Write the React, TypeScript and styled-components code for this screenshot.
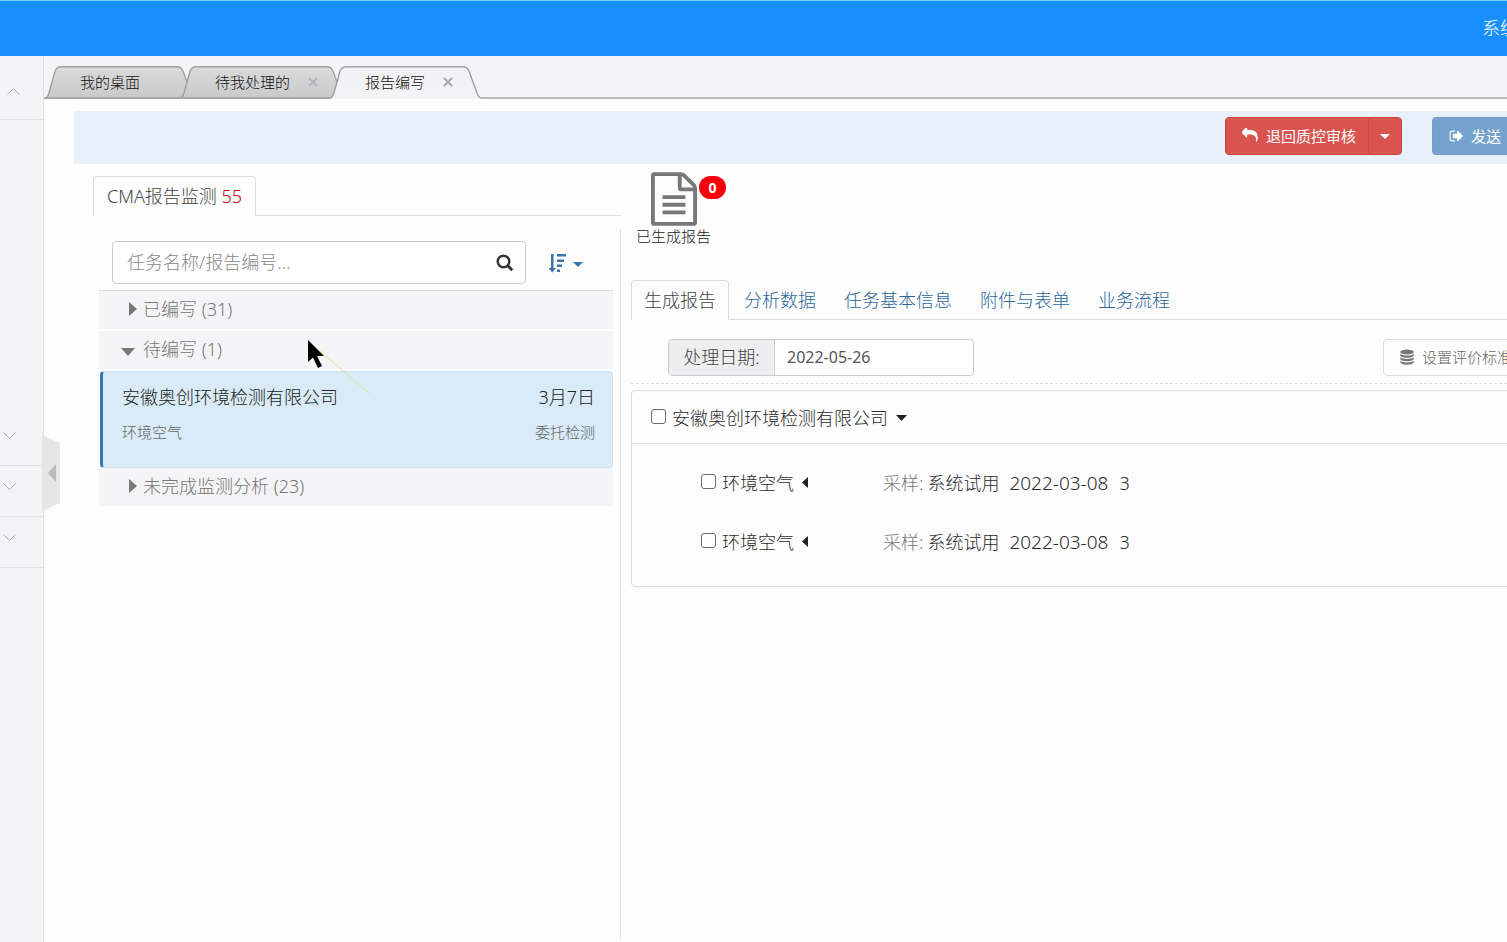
import React from 'react';
import styled, { createGlobalStyle } from 'styled-components';

const GlobalStyle = createGlobalStyle`
  * { box-sizing: border-box; }
  html, body, #root { height: 100%; }
  body {
    margin: 0;
    overflow: hidden;
    background: #fdfdfe;
    color: #2b2b2b;
    font-family: "Noto Sans", "Noto Sans CJK SC", sans-serif;
    font-size: 18px;
    font-weight: 300;
    line-height: 26px;
  }
  button, input { font: inherit; color: inherit; }
  button { background: none; border: 0; padding: 0; cursor: pointer; white-space: nowrap; }
  a { text-decoration: none; color: inherit; }
  svg { display: block; flex: none; }
`;

const Page = styled.div`
  display: flex;
  flex-direction: column;
  width: calc(100% + 60px);
  min-height: 100%;
`;

const Header = styled.header`
  display: flex;
  align-items: center;
  justify-content: flex-end;
  height: 56px;
  padding: 0 49px 2px 0;
  background: #188fff;
  border-top: 1px solid #7fd0f5;
  color: #fff;
`;

const Columns = styled.div`
  display: flex;
  flex: 1;
`;

const Sidebar = styled.nav`
  position: relative;
  width: 44px;
  flex: none;
  background: #f4f4f7;
  border-right: 1px solid #e0e0e3;
`;

const SideItem = styled.button<{ $h: number; $up?: boolean }>`
  display: flex;
  align-items: center;
  width: 100%;
  height: ${p => p.$h}px;
  padding: ${p => (p.$up ? '8px 0 0 7px' : '0 0 9px 3px')};
  border-bottom: 1px solid #e0e0e3;
`;

const SubMenu = styled.div`
  height: 294px;
`;

const CollapseHandle = styled.button`
  position: absolute;
  left: 42px;
  top: 379px;
  z-index: 3;
`;

const Main = styled.main`
  flex: 1;
  min-width: 0;
`;

const TabStrip = styled.div`
  display: flex;
  align-items: flex-end;
  height: 43px;
  padding-left: 1px;
  background: #f4f4f7;
  box-shadow: inset 0 -2px 0 #bcbcbe;
`;

const WindowTab = styled.div<{ $w: number }>`
  position: relative;
  display: flex;
  align-items: center;
  gap: 18px;
  width: ${p => p.$w}px;
  height: 33px;
  margin-right: -15px;
  padding: 0 0 2px 35px;
  font-size: 15px;
  line-height: 20px;
  color: #111;
  > svg { position: absolute; left: 0; top: 0; }
`;

const TabLabel = styled.button`
  position: relative;
`;

const Workspace = styled.div`
  padding: 12px 0 0 30px;
`;

const Toolbar = styled.div`
  display: flex;
  align-items: center;
  justify-content: flex-end;
  gap: 30px;
  height: 53px;
  padding: 0 53px 3px 0;
  background: #e8f0fa;
`;

const ButtonGroup = styled.div`
  display: flex;
`;

const ActionButton = styled.button<{ $tone: 'danger' | 'primary' }>`
  display: flex;
  align-items: center;
  gap: 8px;
  height: 38px;
  padding: 0 12px 0 16px;
  border: 1px solid ${p => (p.$tone === 'danger' ? '#d0433f' : '#719fca')};
  border-radius: 4px;
  background: ${p => (p.$tone === 'danger' ? '#d9534f' : '#75a2cd')};
  color: #fff;
  font-size: 15px;
  font-weight: 400;
  line-height: 20px;
  ${ButtonGroup} &:first-child { border-radius: 4px 0 0 4px; }
  ${ButtonGroup} &:last-child {
    margin-left: -1px;
    padding: 0 11px;
    border-radius: 0 4px 4px 0;
  }
`;

const Split = styled.div`
  display: flex;
  align-items: flex-start;
`;

const ListPane = styled.section`
  width: 547px;
  flex: none;
  padding: 12px 0 0 19px;
`;

const NavTabs = styled.div`
  display: flex;
  border-bottom: 1px solid #ddd;
`;

const NavTab = styled.button<{ $active?: boolean; $wide?: boolean }>`
  height: 40px;
  margin: 0 2px -1px 0;
  padding: 0 ${p => (p.$wide ? 13 : 12)}px 1px;
  border: 1px solid ${p => (p.$active ? '#ddd' : 'transparent')};
  border-bottom-color: ${p => (p.$active ? '#fdfdfe' : 'transparent')};
  border-radius: 4px 4px 0 0;
  color: ${p => (p.$active ? '#444' : '#2b669a')};
`;

const Count = styled.span`
  color: #c00418;
`;

const ListBody = styled.div`
  position: relative;
  min-height: 710px;
  margin-top: 13px;
  padding: 12px 7px 0 6px;
  border-right: 1px solid #ddd;
`;

const SearchRow = styled.div`
  display: flex;
  align-items: center;
  gap: 22px;
  padding: 0 0 6px 13px;
`;

const SearchBox = styled.label`
  display: flex;
  align-items: center;
  width: 414px;
  height: 43px;
  padding: 0 11px 0 14px;
  border: 1px solid #ccc;
  border-radius: 4px;
  background: #fff;
`;

const SearchInput = styled.input`
  flex: 1;
  min-width: 0;
  padding: 0 0 2px;
  border: 0;
  outline: 0;
  background: transparent;
  &::placeholder { color: #888; opacity: 1; }
`;

const SortButton = styled.button`
  display: flex;
  align-items: center;
  gap: 7px;
  > svg:last-child { margin-top: 3px; }
`;

const GroupRow = styled.button<{ $open?: boolean; $first?: boolean }>`
  display: flex;
  align-items: center;
  gap: ${p => (p.$open ? 8 : 6)}px;
  width: 100%;
  height: ${p => (p.$first ? 39 : 38)}px;
  margin-bottom: ${p => (p.$first || p.$open ? '2px' : '0')};
  padding: 0 0 2px ${p => (p.$open ? 22 : 30)}px;
  border-top: ${p => (p.$first ? '1px solid #ddd' : '0')};
  background: #f4f4f6;
  color: #777;
  > svg { margin-top: ${p => (p.$open ? 6 : 0)}px; }
`;

const TaskCard = styled.article`
  height: 97px;
  margin-left: 1px;
  padding: 12px 17px 0 19px;
  border: 1px solid #cfe0ec;
  border-left: 3px solid #3a78ac;
  border-radius: 4px;
  background: #d9ebf7;
`;

const CardLine = styled.div<{ $small?: boolean }>`
  display: flex;
  justify-content: space-between;
  margin-bottom: 9px;
  color: ${p => (p.$small ? '#666' : '#222')};
  font-size: ${p => (p.$small ? 15 : 18)}px;
`;

const DetailPane = styled.section`
  flex: 1;
  min-width: 0;
  padding: 8px 0 0 10px;
`;

const Generated = styled.a`
  position: relative;
  display: flex;
  flex-direction: column;
  align-items: center;
  width: 75px;
  height: 108px;
  margin-left: 5px;
  font-size: 15px;
  line-height: 20px;
  color: #222;
`;

const Badge = styled.span`
  position: absolute;
  left: 63px;
  top: 4px;
  width: 27px;
  height: 23px;
  border-radius: 12px;
  background: #f5000c;
  color: #fff;
  font-size: 14px;
  font-weight: 700;
  line-height: 23px;
  text-align: center;
`;

const FilterBar = styled.div`
  display: flex;
  align-items: flex-start;
  justify-content: space-between;
  height: 64px;
  padding: 19px 42px 0 37px;
  border-bottom: 1px dashed #ddd;
`;

const DateGroup = styled.label`
  display: flex;
  width: 306px;
  height: 37px;
  border: 1px solid #ccc;
  border-radius: 4px;
  background: #fff;
  overflow: hidden;
`;

const DateAddon = styled.span`
  display: flex;
  align-items: center;
  justify-content: center;
  width: 106px;
  padding-bottom: 2px;
  border-right: 1px solid #ccc;
  background: #eeeef0;
  color: #444;
`;

const DateInput = styled.input`
  flex: 1;
  min-width: 0;
  padding: 0 12px 2px;
  border: 0;
  outline: 0;
  background: transparent;
  color: #555;
  font-size: 16px;
  font-weight: 400;
`;

const StandardButton = styled.button`
  display: flex;
  align-items: center;
  gap: 8px;
  height: 37px;
  padding: 0 12px 1px 16px;
  border: 1px solid #ddd;
  border-radius: 4px;
  color: #666;
  font-size: 15px;
`;

const Panel = styled.div`
  margin-top: 6px;
  border: 1px solid #ddd;
  border-radius: 4px;
`;

const PanelHead = styled.div`
  display: flex;
  align-items: center;
  height: 53px;
  padding: 2px 0 0 19px;
  border-bottom: 1px solid #ddd;
`;

const PanelBody = styled.div`
  padding: 9px 0 15px 69px;
`;

const SampleRow = styled.div`
  display: flex;
  align-items: center;
  height: 59px;
`;

const Check = styled.label`
  display: flex;
  align-items: center;
  gap: 6px;
`;

const CheckBox = styled.input`
  appearance: none;
  width: 15px;
  height: 15px;
  margin: 0 0 3px;
  border: 1px solid #6b6b6b;
  border-radius: 3px;
  background: #fff;
  &:checked { background: #337ab7; }
`;

const ToggleButton = styled.button<{ $w?: number }>`
  width: ${p => (p.$w ? `${p.$w}px` : 'auto')};
  padding-left: 8px;
`;

const Muted = styled.span`
  margin-right: 4px;
  color: #777;
`;

const SampleDate = styled.span`
  margin: 0 11px 0 10px;
  font-size: 19px;
`;

const Pointer = styled.svg`
  position: absolute;
  left: 215px;
  top: 111px;
  pointer-events: none;
`;

const Caret = ({ dir = 'down', w, h, color }: { dir?: 'down' | 'left' | 'right'; w: number; h: number; color: string }) => {
  const points = {
    down: `0,0 ${w},0 ${w / 2},${h}`,
    left: `${w},0 ${w},${h} 0,${h / 2}`,
    right: `0,0 ${w},${h / 2} 0,${h}`,
  }[dir];
  return (
    <svg width={w} height={h} aria-hidden="true">
      <polygon points={points} fill={color} />
    </svg>
  );
};

const Chevron = ({ up }: { up?: boolean }) => (
  <svg width="13" height="9" fill="none" stroke="#adadb0" strokeWidth="1" aria-hidden="true">
    <path d={up ? 'M.5 7.5l6-6 6 6' : 'M.5 1.5l6 6 6-6'} />
  </svg>
);

const TabShape = ({ w, active }: { w: number; active?: boolean }) => {
  const edge = `M0 32C2 32 3 30 4 27L10 5Q12 .7 16 .7H${w - 18}Q${w - 14} .7 ${w - 12} 5L${w - 4} 27Q${w - 2} 32 ${w} 32`;
  const id = active ? 'tab-on' : 'tab-off';
  return (
    <svg width={w} height="33" aria-hidden="true">
      <defs>
        <linearGradient id={id} x1="0" y1="0" x2="0" y2="1">
          <stop offset="0" stopColor={active ? '#f1f0f2' : '#dcdbdc'} />
          <stop offset="1" stopColor={active ? '#f4f4f6' : '#c9c8ca'} />
        </linearGradient>
      </defs>
      <path d={`${edge}V33H0Z`} fill={`url(#${id})`} />
      <path d={edge} fill="none" stroke="#a0a0a2" strokeWidth="1.4" />
      {!active && <path d={`M0 32H${w}`} stroke="#a8a8aa" strokeWidth="2" />}
    </svg>
  );
};

const CloseGlyph = ({ color }: { color: string }) => (
  <svg width="10" height="10" stroke={color} strokeWidth="2" aria-hidden="true">
    <path d="M1 1l8 8M9 1l-8 8" />
  </svg>
);

const ReplyIcon = () => (
  <svg width="16" height="16" viewBox="0 100 1792 1792" fill="currentColor" aria-hidden="true">
    <path d="M1792 1120q0 166-127 451-3 7-10.500 24t-13.500 30-13 22q-12 17-28 17-15 0-23.500-10t-8.500-25q0-9 2.500-26.500t2.500-23.500q5-68 5-123 0-112-19.500-200.500t-54-153.500-89-112-116-81.500-144.500-47-165.500-22.500-188.500-7h-224v256q0 26-19 45t-45 19-45-19l-512-512q-19-19-19-45t19-45l512-512q19-19 45-19t45 19 19 45v256h224q713 0 875 403 53 134 53 333z" />
  </svg>
);

const SendIcon = () => (
  <svg width="14" height="14" viewBox="0 128 1664 1536" fill="currentColor" aria-hidden="true">
    <path d="M704 1440q0 4 1 20t.5 26.500-3 23.500-10 19.500-20.500 6.500h-320q-119 0-203.500-84.500t-84.500-203.500v-704q0-119 84.500-203.500t203.500-84.500h320q13 0 22.500 9.500t9.500 22.500q0 4 1 20t.5 26.500-3 23.500-10 19.500-20.500 6.500h-320q-66 0-113 47t-47 113v704q0 66 47 113t113 47h312l11.500 1 11.500 3 8 5.500 7 9 2 13.500zm928-544q0 26-19 45l-544 544q-19 19-45 19t-45-19-19-45v-288h-448q-26 0-45-19t-19-45v-384q0-26 19-45t45-19h448v-288q0-26 19-45t45-19 45 19l544 544q19 19 19 45z" />
  </svg>
);

const SearchIcon = () => (
  <svg width="18" height="18" viewBox="0 0 18 18" fill="none" stroke="#333" aria-hidden="true">
    <circle cx="7.500" cy="7.500" r="5.800" strokeWidth="2.400" />
    <path d="M11.500 11.500l4.800 4.800" strokeWidth="3" />
  </svg>
);

const SortIcon = () => (
  <svg width="18" height="20" viewBox="0 0 18 20" fill="#3a75ab" aria-hidden="true">
    <path d="M3 1h2.500v14h2.500L4.200 19.500.500 15H3z" />
    <path d="M9 1h9v2.500H9zM9 6.500h7V9H9zM9 11.500h5V14H9zM9 16.500h3V19H9z" />
  </svg>
);

const DocumentIcon = () => (
  <svg width="46" height="54" viewBox="0 0 1536 1792" fill="#777" aria-hidden="true">
    <path d="M1468 380q28 28 48 76t20 88v1152q0 40-28 68t-68 28h-1344q-40 0-68-28t-28-68v-1600q0-40 28-68t68-28h896q40 0 88 20t76 48zm-444-244v376h376q-10-29-22-41l-313-313q-12-12-41-22zm384 1528v-1024h-416q-40 0-68-28t-28-68v-416h-768v1536h1280zm-1024-864q0-14 9-23t23-9h704q14 0 23 9t9 23v64q0 14-9 23t-23 9h-704q-14 0-23-9t-9-23v-64zm736 224q14 0 23 9t9 23v64q0 14-9 23t-23 9h-704q-14 0-23-9t-9-23v-64q0-14 9-23t23-9h704zm0 256q14 0 23 9t9 23v64q0 14-9 23t-23 9h-704q-14 0-23-9t-9-23v-64q0-14 9-23t23-9h704z" />
  </svg>
);

const DatabaseIcon = () => (
  <svg width="14" height="16" viewBox="0 0 14 16" fill="#777" aria-hidden="true">
    <ellipse cx="7" cy="3" rx="6.800" ry="2.600" />
    <path d="M.2 4.800Q2 6.600 7 6.600T13.800 4.800V6.500Q12.500 8.800 7 8.800T.2 6.500z" />
    <path d="M.2 8.300Q2 10 7 10T13.800 8.300V10Q12.500 12.200 7 12.200T.2 10z" />
    <path d="M.2 11.700Q2 13.400 7 13.400T13.800 11.700V13.200Q12.500 15.700 7 15.700T.2 13.200z" />
  </svg>
);

const windowTabs = [
  { label: '我的桌面', width: 150 },
  { label: '待我处理的', width: 165, closable: true },
  { label: '报告编写', width: 151, closable: true, active: true },
];

const detailTabs = ['生成报告', '分析数据', '任务基本信息', '附件与表单', '业务流程'];

const samples = [
  { name: '环境空气', by: '系统试用', date: '2022-03-08', count: 3 },
  { name: '环境空气', by: '系统试用', date: '2022-03-08', count: 3 },
];

export default function App() {
  return (
    <>
      <GlobalStyle />
      <Page>
        <Header>系统</Header>
        <Columns>
          <Sidebar>
            <SideItem $h={64} $up aria-label="收起"><Chevron up /></SideItem>
            <SubMenu />
            <SideItem $h={52} aria-label="展开"><Chevron /></SideItem>
            <SideItem $h={51} aria-label="展开"><Chevron /></SideItem>
            <SideItem $h={51} aria-label="展开"><Chevron /></SideItem>
            <CollapseHandle aria-label="折叠侧栏">
              <svg width="18" height="76" aria-hidden="true">
                <path d="M0 0l18 8v60L0 76z" fill="#e6e6e7" />
                <path d="M14 29v18l-8-9z" fill="#bbb" />
              </svg>
            </CollapseHandle>
          </Sidebar>
          <Main>
            <TabStrip>
              {windowTabs.map(tab => (
                <WindowTab key={tab.label} $w={tab.width}>
                  <TabShape w={tab.width} active={tab.active} />
                  <TabLabel>{tab.label}</TabLabel>
                  {tab.closable && (
                    <TabLabel aria-label="关闭">
                      <CloseGlyph color={tab.active ? '#aaa9b0' : '#b4b3b8'} />
                    </TabLabel>
                  )}
                </WindowTab>
              ))}
            </TabStrip>
            <Workspace>
              <Toolbar>
                <ButtonGroup>
                  <ActionButton $tone="danger"><ReplyIcon />退回质控审核</ActionButton>
                  <ActionButton $tone="danger" aria-label="更多">
                    <Caret w={10} h={5} color="#fff" />
                  </ActionButton>
                </ButtonGroup>
                <ActionButton $tone="primary"><SendIcon />发送</ActionButton>
              </Toolbar>
              <Split>
                <ListPane>
                  <NavTabs>
                    <NavTab $active $wide>CMA报告监测 <Count>55</Count></NavTab>
                  </NavTabs>
                  <ListBody>
                    <SearchRow>
                      <SearchBox>
                        <SearchInput aria-label="搜索任务" placeholder="任务名称/报告编号..." />
                        <SearchIcon />
                      </SearchBox>
                      <SortButton aria-label="排序">
                        <SortIcon />
                        <Caret w={10} h={5} color="#3a75ab" />
                      </SortButton>
                    </SearchRow>
                    <GroupRow $first>
                      <Caret dir="right" w={8} h={14} color="#777" />已编写 (31)
                    </GroupRow>
                    <GroupRow $open>
                      <Caret w={14} h={8} color="#777" />待编写 (1)
                    </GroupRow>
                    <TaskCard>
                      <CardLine><span>安徽奥创环境检测有限公司</span><span>3月7日</span></CardLine>
                      <CardLine $small><span>环境空气</span><span>委托检测</span></CardLine>
                    </TaskCard>
                    <GroupRow>
                      <Caret dir="right" w={8} h={14} color="#777" />未完成监测分析 (23)
                    </GroupRow>
                    <Pointer width="66" height="58" aria-hidden="true">
                      <path d="M12 11L62 54" stroke="#e6e06a" strokeOpacity=".7" strokeWidth="1" />
                      <path d="M0 0V22L5 17.500 10 28 14 26 9 16H16Z" fill="#000" />
                    </Pointer>
                  </ListBody>
                </ListPane>
                <DetailPane>
                  <Generated href="#reports">
                    <DocumentIcon />
                    已生成报告
                    <Badge>0</Badge>
                  </Generated>
                  <NavTabs>
                    {detailTabs.map((label, i) => (
                      <NavTab key={label} $active={i === 0}>{label}</NavTab>
                    ))}
                  </NavTabs>
                  <FilterBar>
                    <DateGroup>
                      <DateAddon>处理日期:</DateAddon>
                      <DateInput defaultValue="2022-05-26" />
                    </DateGroup>
                    <StandardButton><DatabaseIcon />设置评价标准</StandardButton>
                  </FilterBar>
                  <Panel>
                    <PanelHead>
                      <Check><CheckBox type="checkbox" />安徽奥创环境检测有限公司</Check>
                      <ToggleButton aria-label="收起"><Caret w={11} h={6} color="#222" /></ToggleButton>
                    </PanelHead>
                    <PanelBody>
                      {samples.map((s, i) => (
                        <SampleRow key={i}>
                          <Check><CheckBox type="checkbox" />{s.name}</Check>
                          <ToggleButton $w={89} aria-label="展开">
                            <Caret dir="left" w={6} h={11} color="#222" />
                          </ToggleButton>
                          <Muted>采样:</Muted>
                          <span>{s.by}</span>
                          <SampleDate>{s.date}</SampleDate>
                          <span>{s.count}</span>
                        </SampleRow>
                      ))}
                    </PanelBody>
                  </Panel>
                </DetailPane>
              </Split>
            </Workspace>
          </Main>
        </Columns>
      </Page>
    </>
  );
}
